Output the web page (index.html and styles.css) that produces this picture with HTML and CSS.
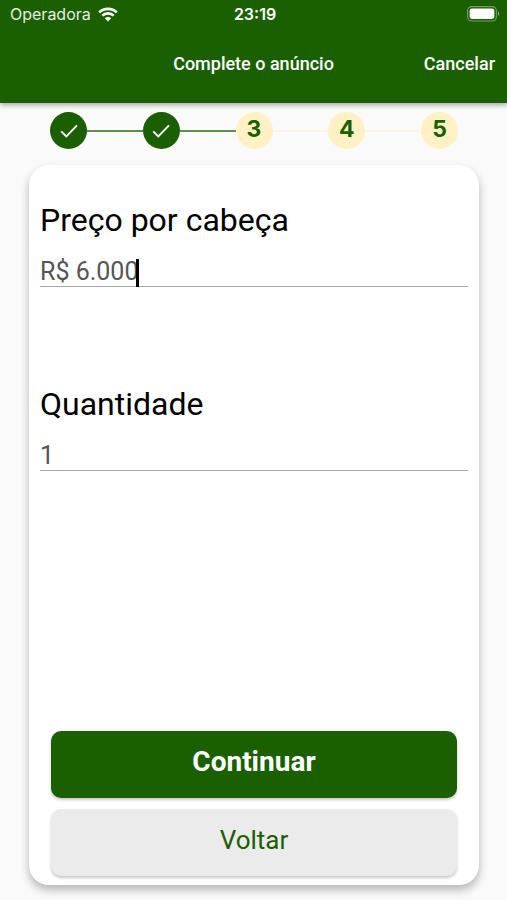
FILE: index.html
```html
<!DOCTYPE html>
<html lang="pt-BR">
<head>
  <meta charset="utf-8">
  <meta name="viewport" content="width=device-width, initial-scale=1">
  <title>Complete o anúncio</title>
  <link rel="stylesheet" href="styles.css">
</head>
<body>
  <header class="top">
    <div class="status">
      <div class="carrier">
        <span>Operadora</span>
        <svg class="wifi" viewBox="0 0 20 15" aria-hidden="true">
          <path d="M1.2 5.4a12.6 12.6 0 0 1 17.6 0M4.3 8.6a8.2 8.2 0 0 1 11.4 0" fill="none" stroke="currentColor" stroke-width="2.7"/>
          <path d="M10 14.6 6.8 11.3a4.6 4.6 0 0 1 6.4 0z" fill="currentColor"/>
        </svg>
      </div>
      <time class="clock">23:19</time>
      <svg class="battery" viewBox="0 0 33 16" aria-hidden="true">
        <rect x=".6" y=".6" width="28.8" height="14.4" rx="4.2" fill="none" stroke="#fff" stroke-opacity=".4" stroke-width="1.1"/>
        <rect x="2.6" y="2.6" width="24.8" height="10.4" rx="2.4" fill="#fff"/>
        <path d="M31 5.6c1.6.6 1.6 3.8 0 4.4z" fill="#fff" fill-opacity=".5"/>
      </svg>
    </div>
    <div class="navbar">
      <h1 class="title">Complete o anúncio</h1>
      <button class="cancel" type="button">Cancelar</button>
    </div>
  </header>

  <main class="page">
    <ol class="steps">
      <li class="step done">
        <svg viewBox="0 0 24 24" role="img" aria-label="Etapa 1 concluída"><path d="M4.2 12.4 9.3 17.4 20 6.4"/></svg>
      </li>
      <li class="line done" role="presentation"></li>
      <li class="step done">
        <svg viewBox="0 0 24 24" role="img" aria-label="Etapa 2 concluída"><path d="M4.2 12.4 9.3 17.4 20 6.4"/></svg>
      </li>
      <li class="line done" role="presentation"></li>
      <li class="step">3</li>
      <li class="line" role="presentation"></li>
      <li class="step">4</li>
      <li class="line" role="presentation"></li>
      <li class="step">5</li>
    </ol>

    <form class="card">
      <div class="group">
        <label for="price">Preço por cabeça</label>
        <div class="field">
          <input id="price" type="text" value="R$ 6.000">
          <span class="caret"></span>
        </div>
      </div>
      <div class="group">
        <label for="amount">Quantidade</label>
        <div class="field">
          <input id="amount" type="text" value="1">
        </div>
      </div>
      <div class="actions">
        <button class="btn primary" type="submit">Continuar</button>
        <button class="btn secondary" type="button">Voltar</button>
      </div>
    </form>
  </main>
</body>
</html>
```
FILE: styles.css
```css
* {
  box-sizing: border-box;
}

body {
  margin: 0;
  min-height: 100vh;
  display: flex;
  flex-direction: column;
  background: #fafafa;
  color: #000;
  font-family: Roboto, "Liberation Sans", sans-serif;
}

button,
input {
  font-family: inherit;
}

.top {
  height: 103px;
  background: #1a5f00;
  color: #fff;
  box-shadow: 0 2px 5px rgba(0, 0, 0, 0.35);
}

.status {
  display: grid;
  grid-template-columns: 1fr auto 1fr;
  align-items: center;
  height: 28px;
  padding: 0 7px 0 10px;
  font-family: Inter, "Liberation Sans", sans-serif;
  font-size: 16px;
  line-height: 28px;
}

.carrier {
  display: flex;
  align-items: center;
  gap: 7px;
  color: #e4eee0;
}

.wifi {
  width: 20px;
  height: 15px;
  color: #fff;
}

.clock {
  font-weight: 600;
}

.battery {
  width: 33px;
  height: 16px;
  justify-self: end;
}

.navbar {
  display: grid;
  grid-template-columns: 1fr auto 1fr;
  align-items: center;
  height: 70px;
  padding: 0 12px;
}

.title {
  grid-column: 2;
  margin: 0;
  font-size: 18px;
  font-weight: 500;
}

.cancel {
  justify-self: end;
  padding: 0;
  border: 0;
  background: none;
  color: #fff;
  font-size: 18px;
  font-weight: 500;
}

.page {
  flex: 1;
  display: flex;
  flex-direction: column;
  padding: 9px 28px 15px 29px;
}

.steps {
  display: flex;
  align-items: center;
  margin: 0 21px 16px;
  padding: 0;
  list-style: none;
}

.step {
  width: 37px;
  height: 37px;
  border-radius: 50%;
  background: #fff1c4;
  color: #1a5f00;
  font-family: Inter, "Liberation Sans", sans-serif;
  font-size: 23px;
  font-weight: 700;
  line-height: 34px;
  text-align: center;
}

.step.done {
  display: grid;
  place-items: center;
  background: #1a5f00;
}

.step svg {
  width: 24px;
  height: 24px;
  fill: none;
  stroke: #fff;
  stroke-width: 2;
}

.line {
  flex: 1;
  height: 2px;
  background: #fcf6df;
}

.line.done {
  background: #5d8f4c;
}

.card {
  flex: 1;
  display: flex;
  flex-direction: column;
  padding: 31px 11px 9px;
  border-radius: 20px;
  background: #fff;
  box-shadow: 0 5px 10px rgba(0, 0, 0, 0.28);
}

.group + .group {
  margin-top: 93px;
}

.group label {
  display: block;
  font-size: 32px;
  line-height: 48px;
}

.field {
  position: relative;
  height: 43px;
  padding-top: 12px;
  border-bottom: 1px solid #a8a8a8;
}

.field input {
  display: block;
  width: 100%;
  height: 30px;
  padding: 0;
  border: 0;
  outline: 0;
  background: none;
  color: #555;
  font-size: 25px;
}

.caret {
  position: absolute;
  left: 96px;
  bottom: -1px;
  width: 3px;
  height: 28px;
  background: #000;
}

.actions {
  display: flex;
  flex-direction: column;
  gap: 11px;
  margin-top: auto;
  padding: 0 11px;
}

.btn {
  height: 67px;
  padding: 0 0 6px;
  border: 0;
  border-radius: 10px;
  box-shadow: 0 2px 3px rgba(0, 0, 0, 0.22);
}

.primary {
  background: #1a5f00;
  color: #fff;
  font-size: 28px;
  font-weight: 700;
}

.secondary {
  background: #ebebeb;
  color: #1a5f00;
  font-size: 26px;
}
```
